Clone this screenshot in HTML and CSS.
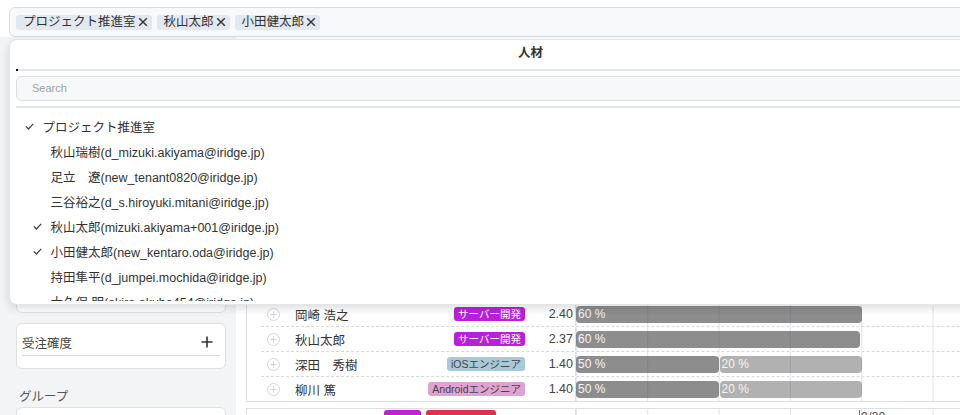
FILE: index.html
```html
<!DOCTYPE html>
<html lang="ja">
<head>
<meta charset="utf-8">
<title>人材</title>
<link rel="stylesheet" href="styles.css">
</head>
<body>
<div class="app">
  <header class="topbar">
    <div class="tag-input">
      <span class="chip">プロジェクト推進室<svg class="chip-x" viewBox="0 0 10 10"><path d="M1.2 1.2L8.8 8.8M8.8 1.2L1.2 8.8"/></svg></span>
      <span class="chip">秋山太郎<svg class="chip-x" viewBox="0 0 10 10"><path d="M1.2 1.2L8.8 8.8M8.8 1.2L1.2 8.8"/></svg></span>
      <span class="chip">小田健太郎<svg class="chip-x" viewBox="0 0 10 10"><path d="M1.2 1.2L8.8 8.8M8.8 1.2L1.2 8.8"/></svg></span>
    </div>

    <div class="dropdown">
      <div class="dd-head">人材<span class="dd-dot"></span></div>
      <div class="dd-search-wrap">
        <div class="dd-search">Search</div>
      </div>
      <ul class="dd-list">
        <li class="dd-item lv1"><span class="check"><svg viewBox="0 0 9 7"><path d="M0.8 3.4L3.4 6L8.2 0.9"/></svg></span>プロジェクト推進室</li>
        <li class="dd-item lv2"><span class="check"></span>秋山瑞樹(d_mizuki.akiyama@iridge.jp)</li>
        <li class="dd-item lv2"><span class="check"></span>足立　遼(new_tenant0820@iridge.jp)</li>
        <li class="dd-item lv2"><span class="check"></span>三谷裕之(d_s.hiroyuki.mitani@iridge.jp)</li>
        <li class="dd-item lv2"><span class="check"><svg viewBox="0 0 9 7"><path d="M0.8 3.4L3.4 6L8.2 0.9"/></svg></span>秋山太郎(mizuki.akiyama+001@iridge.jp)</li>
        <li class="dd-item lv2"><span class="check"><svg viewBox="0 0 9 7"><path d="M0.8 3.4L3.4 6L8.2 0.9"/></svg></span>小田健太郎(new_kentaro.oda@iridge.jp)</li>
        <li class="dd-item lv2"><span class="check"></span>持田隼平(d_jumpei.mochida@iridge.jp)</li>
        <li class="dd-item lv2"><span class="check"></span>大久保 明(akira.okubo454@iridge.jp)</li>
        <li class="dd-item lv2"><span class="check"></span>三谷裕之(d_s.hiroyuki.mitani@iridge.jp)</li>
      </ul>
    </div>
  </header>

  <div class="layout">
    <aside class="sidebar">
      <div class="sb-label">人材</div>
      <div class="card card-tall"></div>
      <div class="card">
        <div class="filter-row">
          <span>受注確度</span>
          <svg class="plus" viewBox="0 0 12 12"><path d="M6 0.5V11.5M0.5 6H11.5"/></svg>
        </div>
      </div>
      <div class="sb-label sb-label-gap">グループ</div>
      <div class="card">
        <div class="filter-row">
          <span>グループ</span>
          <svg class="plus" viewBox="0 0 12 12"><path d="M6 0.5V11.5M0.5 6H11.5"/></svg>
        </div>
      </div>
    </aside>

    <main class="main">
      <section class="project">
        <div class="proj-head">
          <div class="proj-info">
            <div class="proj-tags"><span class="htag magenta wide">企画</span><span class="htag red">ディレクター</span></div>
            <div class="proj-name">アプリ開発</div>
          </div>
          <div class="chart"></div>
        </div>
        <div class="row">
          <div class="info"><svg class="add" viewBox="0 0 13 13"><circle cx="6.5" cy="6.5" r="6"/><path d="M6.5 3.3V9.7M3.3 6.5H9.7"/></svg><span class="name">秋山瑞樹</span><span class="badge server">サーバー開発</span><span class="num">1.20</span></div>
          <div class="chart"><span class="bar" style="width:142px">40 %</span></div>
        </div>
        <div class="row">
          <div class="info"><svg class="add" viewBox="0 0 13 13"><circle cx="6.5" cy="6.5" r="6"/><path d="M6.5 3.3V9.7M3.3 6.5H9.7"/></svg><span class="name">三谷裕之</span><span class="badge ios">iOSエンジニア</span><span class="num">0.80</span></div>
          <div class="chart"><span class="bar" style="width:142px">30 %</span></div>
        </div>
        <div class="row">
          <div class="info"><svg class="add" viewBox="0 0 13 13"><circle cx="6.5" cy="6.5" r="6"/><path d="M6.5 3.3V9.7M3.3 6.5H9.7"/></svg><span class="name">持田隼平</span><span class="badge android">Androidエンジニア</span><span class="num">0.60</span></div>
          <div class="chart"><span class="bar light" style="width:142px">20 %</span></div>
        </div>
      </section>

      <section class="project">
        <div class="proj-head">
          <div class="proj-info">
            <div class="proj-tags"><span class="htag magenta wide">企画</span><span class="htag red">ディレクター</span></div>
            <div class="proj-name">業務システム</div>
          </div>
          <div class="chart"></div>
        </div>
        <div class="row">
          <div class="info"><svg class="add" viewBox="0 0 13 13"><circle cx="6.5" cy="6.5" r="6"/><path d="M6.5 3.3V9.7M3.3 6.5H9.7"/></svg><span class="name">小田健太郎</span><span class="badge server">サーバー開発</span><span class="num">2.00</span></div>
          <div class="chart"><span class="bar" style="width:285px">50 %</span></div>
        </div>
        <div class="row">
          <div class="info"><svg class="add" viewBox="0 0 13 13"><circle cx="6.5" cy="6.5" r="6"/><path d="M6.5 3.3V9.7M3.3 6.5H9.7"/></svg><span class="name">足立　遼</span><span class="badge ios">iOSエンジニア</span><span class="num">1.40</span></div>
          <div class="chart"><span class="bar" style="width:142px">50 %</span><span class="bar light" style="width:143px">20 %</span></div>
        </div>
        <div class="row">
          <div class="info"><svg class="add" viewBox="0 0 13 13"><circle cx="6.5" cy="6.5" r="6"/><path d="M6.5 3.3V9.7M3.3 6.5H9.7"/></svg><span class="name">秋山瑞樹</span><span class="badge server">サーバー開発</span><span class="num">2.40</span></div>
          <div class="chart"><span class="bar" style="width:285px">60 %</span></div>
        </div>
        <div class="row">
          <div class="info"><svg class="add" viewBox="0 0 13 13"><circle cx="6.5" cy="6.5" r="6"/><path d="M6.5 3.3V9.7M3.3 6.5H9.7"/></svg><span class="name">持田隼平</span><span class="badge android">Androidエンジニア</span><span class="num">1.40</span></div>
          <div class="chart"><span class="bar" style="width:142px">50 %</span><span class="bar light" style="width:143px">20 %</span></div>
        </div>
        <div class="row">
          <div class="info"><svg class="add" viewBox="0 0 13 13"><circle cx="6.5" cy="6.5" r="6"/><path d="M6.5 3.3V9.7M3.3 6.5H9.7"/></svg><span class="name">岡崎 浩之</span><span class="badge server">サーバー開発</span><span class="num">2.40</span></div>
          <div class="chart"><span class="bar" style="width:285.5px">60 %</span></div>
        </div>
        <div class="row">
          <div class="info"><svg class="add" viewBox="0 0 13 13"><circle cx="6.5" cy="6.5" r="6"/><path d="M6.5 3.3V9.7M3.3 6.5H9.7"/></svg><span class="name">秋山太郎</span><span class="badge server">サーバー開発</span><span class="num">2.37</span></div>
          <div class="chart"><span class="bar" style="width:283.5px">60 %</span></div>
        </div>
        <div class="row">
          <div class="info"><svg class="add" viewBox="0 0 13 13"><circle cx="6.5" cy="6.5" r="6"/><path d="M6.5 3.3V9.7M3.3 6.5H9.7"/></svg><span class="name">深田　秀樹</span><span class="badge ios">iOSエンジニア</span><span class="num">1.40</span></div>
          <div class="chart"><span class="bar" style="width:142.5px">50 %</span><span class="bar light" style="width:142.5px">20 %</span></div>
        </div>
        <div class="row">
          <div class="info"><svg class="add" viewBox="0 0 13 13"><circle cx="6.5" cy="6.5" r="6"/><path d="M6.5 3.3V9.7M3.3 6.5H9.7"/></svg><span class="name">柳川 篤</span><span class="badge android">Androidエンジニア</span><span class="num">1.40</span></div>
          <div class="chart"><span class="bar" style="width:142.5px">50 %</span><span class="bar light" style="width:142.5px">20 %</span></div>
        </div>
      </section>

      <section class="project">
        <div class="proj-head">
          <div class="proj-info">
            <div class="proj-tags"><span class="htag magenta wide">企画</span><span class="htag red">ディレクター</span></div>
            <div class="proj-name">新規サービス</div>
          </div>
          <div class="chart"><span class="milestone" style="margin-left:283px">9/30</span></div>
        </div>
      </section>
    </main>
  </div>
</div>
</body>
</html>
```

FILE: styles.css
```css
* {
  box-sizing: border-box;
}

html,
body {
  margin: 0;
  padding: 0;
}

body {
  width: 960px;
  height: 415px;
  overflow: hidden;
  background: #ffffff;
  color: #333333;
  font-family: "Liberation Sans", "Noto Sans CJK JP", sans-serif;
}

.app {
  position: relative;
  width: 960px;
  height: 415px;
  overflow: hidden;
}

/* ---------- top tag input ---------- */
.topbar {
  position: relative;
  z-index: 5;
  height: 37px;
  padding: 7px 0 0 9px;
  background: #ffffff;
}

.tag-input {
  display: flex;
  align-items: center;
  gap: 5px;
  width: 1043px;
  height: 30px;
  padding: 0 6px;
  border: 1px solid #d8dbe0;
  border-radius: 6px;
  background: #f8f9fa;
}

.chip {
  display: inline-flex;
  align-items: center;
  height: 15px;
  padding: 0 4px 0 7px;
  border-radius: 3px;
  background: #e2e8f0;
  font-size: 12.5px;
  line-height: 15px;
  color: #333333;
  white-space: nowrap;
}

.chip-x {
  width: 10px;
  height: 10px;
  margin-left: 2px;
  fill: none;
  stroke: #333333;
  stroke-width: 1.4;
}

/* ---------- dropdown ---------- */
.dropdown {
  position: absolute;
  top: 39px;
  left: 9px;
  width: 1043px;
  padding-bottom: 3px;
  background: #ffffff;
  border: 1px solid #e3e5e9;
  border-radius: 8px;
  box-shadow: 0 3px 10px rgba(0, 0, 0, 0.14);
}

.dd-head {
  position: relative;
  height: 31px;
  margin: 0 6px;
  border-bottom: 2px solid #e3e5e9;
  text-align: center;
  font-size: 12.5px;
  font-weight: bold;
  line-height: 26px;
  color: #333333;
}

.dd-dot {
  position: absolute;
  left: 0;
  bottom: -2px;
  width: 2px;
  height: 2px;
  background: #000000;
}

.dd-search-wrap {
  margin: 0 6px;
  padding: 5px 0;
  border-bottom: 2px solid #e3e5e9;
}

.dd-search {
  height: 25px;
  padding-left: 15px;
  border: 1px solid #dadde2;
  border-radius: 6px;
  background: #f7f8fa;
  font-size: 11px;
  line-height: 23px;
  color: #9aa0a6;
}

.dd-list {
  height: 193px;
  margin: 0;
  padding: 6px 0 0;
  overflow: hidden;
  list-style: none;
}

.dd-item {
  display: flex;
  align-items: center;
  height: 25px;
  font-size: 12.5px;
  color: #333333;
  white-space: nowrap;
}

.dd-item.lv1 {
  padding-left: 15px;
}

.dd-item.lv2 {
  padding-left: 23px;
}

.check {
  display: inline-flex;
  align-items: center;
  flex: none;
  width: 17.5px;
}

.check svg {
  width: 9px;
  height: 7px;
  fill: none;
  stroke: #444444;
  stroke-width: 1.3;
}

/* ---------- layout ---------- */
.layout {
  display: flex;
  height: 378px;
}

.sidebar {
  flex: none;
  width: 236px;
  padding: 14px 10px 0 16px;
  background: #f3f4f6;
}

.sb-label {
  margin: 0 0 2px 3px;
  font-size: 12.5px;
  line-height: 16px;
  color: #555555;
}

.sb-label-gap {
  margin-top: 20px;
}

.card {
  padding: 5px 5px 12px;
  border: 1px solid #dfe1e5;
  border-radius: 6px;
  background: #ffffff;
}

.card + .card {
  margin-top: 10px;
}

.card-tall {
  height: 244px;
}

.filter-row {
  display: flex;
  align-items: center;
  justify-content: space-between;
  height: 27px;
  padding-right: 7px;
  border-bottom: 1px solid #d5d8dc;
  font-size: 12.5px;
  color: #444444;
}

.plus {
  width: 12px;
  height: 12px;
  fill: none;
  stroke: #333333;
  stroke-width: 1.6;
}

/* ---------- main ---------- */
.main {
  flex: 1;
  min-width: 0;
  padding: 10px 0 0 10px;
  overflow: hidden;
  background: #ffffff;
}

.project {
  width: 1100px;
  margin-bottom: 6px;
  border: 1px solid #dcdfe3;
  background: #ffffff;
}

.proj-head {
  display: flex;
  height: 36px;
  border-bottom: 1px dashed #d6d9dd;
}

.proj-info {
  flex: none;
  display: flex;
  flex-direction: column;
  width: 329px;
  border-right: 1px solid #dcdfe3;
}

.proj-tags {
  display: flex;
  justify-content: flex-end;
  gap: 5px;
  padding: 1px 79px 0 0;
}

.htag {
  height: 20px;
  padding: 0 4px;
  border-radius: 3px;
  font-size: 10.5px;
  line-height: 20px;
  color: #ffffff;
}

.htag.wide {
  padding: 0 8px;
}

.htag.magenta {
  background: #c21fdb;
}

.htag.red {
  background: #e0304f;
}

.proj-name {
  padding-left: 14px;
  font-size: 12.5px;
  line-height: 14px;
}

.row {
  display: flex;
  height: 25px;
  margin-left: 14px;
  border-bottom: 1px dashed #d6d9dd;
}

.row:last-child {
  height: 24px;
  border-bottom: none;
}

.info {
  flex: none;
  display: flex;
  align-items: center;
  width: 315px;
  padding-left: 6px;
  border-right: 1px solid #dcdfe3;
  font-size: 12.5px;
}

.add {
  flex: none;
  width: 13px;
  height: 13px;
  margin-right: 15px;
  fill: none;
  stroke: #d3d7dc;
  stroke-width: 1;
}

.name {
  flex: 1;
  color: #333333;
  white-space: nowrap;
}

.badge {
  height: 14px;
  margin-right: 4px;
  padding: 0 4px;
  border-radius: 3px;
  font-size: 10.5px;
  line-height: 14px;
  white-space: nowrap;
}

.badge.server {
  background: #bb1fdc;
  color: #ffffff;
}

.badge.ios {
  background: #a9c9d7;
  color: #444444;
}

.badge.android {
  background: #dfa3d3;
  color: #444444;
}

.num {
  flex: none;
  width: 46px;
  padding-right: 2px;
  text-align: right;
  color: #444444;
}

.chart {
  position: relative;
  flex: 1;
  display: flex;
  align-items: center;
  gap: 1px;
}

.chart::after {
  content: "";
  position: absolute;
  inset: 0;
  pointer-events: none;
  background-image: linear-gradient(to right,
      transparent 0, transparent 70.35px,
      rgba(60, 80, 110, 0.17) 70.35px, rgba(60, 80, 110, 0.17) 71.35px);
  background-size: 71.35px 100%;
  background-position: 0.85px 0;
  background-repeat: repeat-x;
}

.proj-head .chart {
  align-items: flex-start;
  padding-top: 1px;
}

.bar {
  flex: none;
  height: 17px;
  padding-left: 2px;
  border-radius: 4px;
  background: #8d8d8d;
  color: #f4f4f4;
  font-size: 12px;
  line-height: 17px;
  white-space: nowrap;
  overflow: hidden;
}

.bar.light {
  background: #b1b1b1;
}

.milestone {
  height: 14px;
  padding-left: 1px;
  border-left: 1px solid #666666;
  font-size: 12.5px;
  line-height: 14px;
  color: #555555;
}
```
